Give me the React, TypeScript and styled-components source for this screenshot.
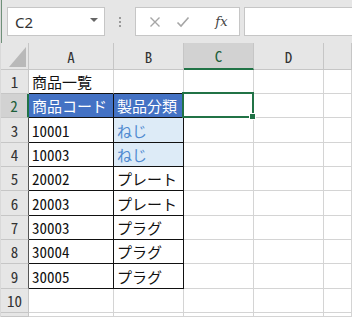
import React from 'react';
import styled, { createGlobalStyle } from 'styled-components';

const GlobalStyle = createGlobalStyle`
    html, body {
        margin: 0;
        padding: 0;
        background: #ffffff;
    }
    body {
        font-family: 'Noto Sans CJK JP', 'Noto Sans', sans-serif;
    }
`;

const GREEN = '#217346';
const GRID = '#d4d4d4';
const HEAD_LINE = '#c6c6c6';

const Window = styled.div`
    width: 352px;
    height: 317px;
    overflow: hidden;
    display: flex;
    flex-direction: column;
    background: #e6e6e6;
    border-left: 1px solid #d9d9d9;
    box-shadow: inset 1px 0 0 #6f9079;
    box-sizing: border-box;
`;

const FormulaBar = styled.div`
    height: 43px;
    flex: none;
    display: flex;
    align-items: flex-start;
    padding: 7px 0 0 6px;
    box-sizing: border-box;
`;

const NameBox = styled.div`
    width: 98px;
    height: 29px;
    box-sizing: border-box;
    background: #fff;
    border: 1px solid ${HEAD_LINE};
    display: flex;
    align-items: center;
    justify-content: space-between;
    padding: 0 6px 0 7px;
    font-family: 'Noto Sans', 'Liberation Sans', sans-serif;
    font-size: 15px;
    color: #333;
`;

const DropArrow = styled.span`
    width: 0;
    height: 0;
    border-left: 4px solid transparent;
    border-right: 4px solid transparent;
    border-top: 4px solid #666;
    margin-top: -3px;
`;

const Grip = styled.div`
    width: 30px;
    height: 29px;
    display: flex;
    flex-direction: column;
    align-items: center;
    justify-content: center;
    gap: 2px;
    span {
        width: 2px;
        height: 2px;
        background: #9a9a9a;
    }
`;

const ButtonBox = styled.div`
    width: 105px;
    height: 29px;
    box-sizing: border-box;
    background: #fff;
    border: 1px solid ${HEAD_LINE};
    display: flex;
    align-items: center;
    justify-content: space-around;
    padding: 0 4px 0 6px;
`;

const FxLabel = styled.span`
    font-family: 'DejaVu Serif', 'Liberation Serif', serif;
    font-style: italic;
    font-size: 13px;
    color: #444;
    margin-left: 10px;
`;

const FormulaInput = styled.div`
    flex: 1;
    height: 29px;
    margin-left: 4px;
    box-sizing: border-box;
    background: #fff;
    border: 1px solid ${HEAD_LINE};
    border-right: none;
`;

const Sheet = styled.div`
    flex: 1;
    display: grid;
    grid-template-columns: 28px 85px 70px 70px 70px 1fr;
    grid-template-rows: 27px 24px 24px 25px 24px 24px 25px 24px 24px 25px 24px 1fr;
    background: #fff;
    font-feature-settings: 'hwid';
`;

const Corner = styled.div`
    background: #e6e6e6;
    border-right: 1px solid ${HEAD_LINE};
    border-bottom: 1px solid ${HEAD_LINE};
    display: flex;
    align-items: flex-end;
    justify-content: flex-end;
    padding: 0 2px 2px 0;
`;

const ColHead = styled.div<{ $active?: boolean }>`
    background: ${(p) => (p.$active ? '#d2d2d2' : '#e6e6e6')};
    border-right: 1px solid ${HEAD_LINE};
    border-bottom: ${(p) => (p.$active ? `2px solid ${GREEN}` : `1px solid ${HEAD_LINE}`)};
    display: flex;
    align-items: center;
    justify-content: center;
    font-size: 15px;
    color: ${(p) => (p.$active ? '#1d5f3a' : '#333')};
    box-sizing: border-box;
`;

const RowHead = styled.div<{ $active?: boolean; $edge?: string }>`
    background: ${(p) => (p.$active ? '#d2d2d2' : '#e6e6e6')};
    border-right: ${(p) => (p.$active ? `2px solid ${GREEN}` : `1px solid ${p.$edge || HEAD_LINE}`)};
    border-bottom: 1px solid ${HEAD_LINE};
    display: flex;
    align-items: center;
    justify-content: center;
    font-size: 15px;
    color: ${(p) => (p.$active ? '#1d5f3a' : '#333')};
    box-sizing: border-box;
`;

const Cell = styled.div<{ $fill?: string; $ink?: string; $right?: string; $bottom?: string }>`
    position: relative;
    background: ${(p) => p.$fill || '#fff'};
    color: ${(p) => p.$ink || '#111'};
    border-right: 1px solid ${(p) => p.$right || GRID};
    border-bottom: 1px solid ${(p) => p.$bottom || GRID};
    display: flex;
    align-items: center;
    padding-left: 3px;
    font-size: 15px;
    white-space: nowrap;
    overflow: visible;
    box-sizing: border-box;
`;

const Selection = styled.div`
    position: absolute;
    top: -2px;
    left: -2px;
    right: -1px;
    bottom: -1px;
    border: 2px solid ${GREEN};
    z-index: 2;
    pointer-events: none;
`;

const FillHandle = styled.div`
    position: absolute;
    right: -4px;
    bottom: -4px;
    width: 5px;
    height: 5px;
    background: ${GREEN};
    border: 1px solid #fff;
    z-index: 3;
`;

type Row = { a: string; b: string; kind?: 'title' | 'head' | 'link' | 'body' | 'empty' };

const rows: Row[] = [
    { a: '商品一覧', b: '', kind: 'title' },
    { a: '商品コード', b: '製品分類', kind: 'head' },
    { a: '10001', b: 'ねじ', kind: 'link' },
    { a: '10003', b: 'ねじ', kind: 'link' },
    { a: '20002', b: 'プレート', kind: 'body' },
    { a: '20003', b: 'プレート', kind: 'body' },
    { a: '30003', b: 'プラグ', kind: 'body' },
    { a: '30004', b: 'プラグ', kind: 'body' },
    { a: '30005', b: 'プラグ', kind: 'body' },
    { a: '', b: '', kind: 'empty' },
    { a: '', b: '', kind: 'empty' },
];

const BLUE = '#4472c4';
const LIGHT = '#ddebf7';

const Toolbar = () => (
    <FormulaBar>
        <NameBox>
            C2
            <DropArrow />
        </NameBox>
        <Grip>
            <span />
            <span />
            <span />
        </Grip>
        <ButtonBox>
            <svg width="12" height="12" viewBox="0 0 12 12">
                <path d="M1.5 1.5 L10.5 10.5 M10.5 1.5 L1.5 10.5" stroke="#a6a6a6" strokeWidth="1.4" />
            </svg>
            <svg width="14" height="12" viewBox="0 0 14 12">
                <path d="M1.5 6.5 L5 10 L12.5 1.5" stroke="#a6a6a6" strokeWidth="1.6" fill="none" />
            </svg>
            <FxLabel>fx</FxLabel>
        </ButtonBox>
        <FormulaInput />
    </FormulaBar>
);

const App = () => {
    return (
        <>
            <GlobalStyle />
            <Window>
                <Toolbar />
                <Sheet>
                    <Corner>
                        <svg width="17" height="20" viewBox="0 0 17 20">
                            <polygon points="17,0 17,20 0,20" fill="#b9b9b9" />
                        </svg>
                    </Corner>
                    <ColHead>A</ColHead>
                    <ColHead>B</ColHead>
                    <ColHead $active>C</ColHead>
                    <ColHead>D</ColHead>
                    <ColHead />
                    {rows.map((r, i) => {
                        const n = i + 1;
                        const inTable = r.kind === 'head' || r.kind === 'link' || r.kind === 'body';
                        const black = inTable ? '#111' : undefined;
                        const fill = r.kind === 'head' ? BLUE : undefined;
                        const ink = r.kind === 'head' ? '#fff' : undefined;
                        return (
                            <React.Fragment key={n}>
                                <RowHead $active={n === 2} $edge={n >= 3 && n <= 9 ? '#555' : undefined}>
                                    {n <= 10 ? n : ''}
                                </RowHead>
                                <Cell $fill={fill} $ink={ink} $right={black} $bottom={r.kind === 'title' || inTable ? '#111' : undefined}>
                                    {r.a}
                                </Cell>
                                <Cell
                                    $fill={r.kind === 'link' ? LIGHT : fill}
                                    $ink={r.kind === 'link' ? '#4f8ad0' : ink}
                                    $right={black}
                                    $bottom={r.kind === 'title' || inTable ? '#111' : undefined}
                                >
                                    {r.b}
                                </Cell>
                                <Cell>
                                    {n === 2 && (
                                        <Selection>
                                            <FillHandle />
                                        </Selection>
                                    )}
                                </Cell>
                                <Cell />
                                <Cell />
                            </React.Fragment>
                        );
                    })}
                </Sheet>
            </Window>
        </>
    );
};

export default App;
